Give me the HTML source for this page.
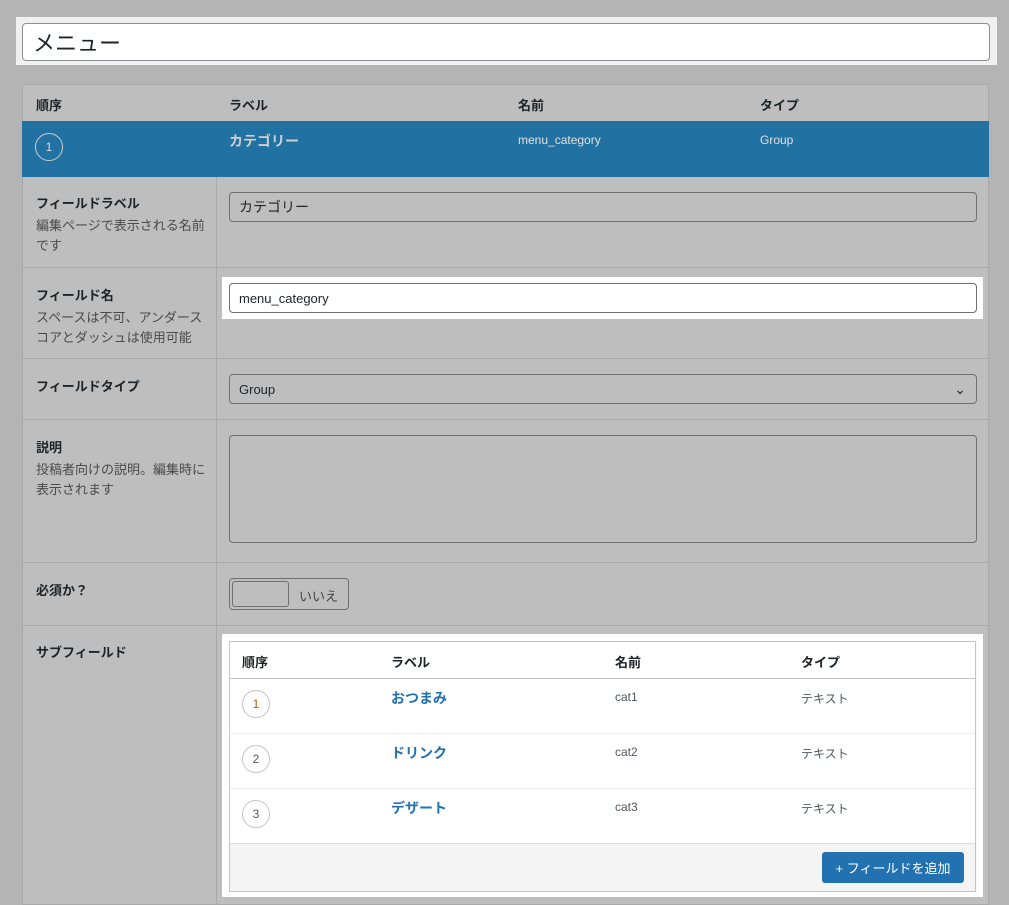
<html><head><style>
*{box-sizing:border-box;margin:0;padding:0}
body{width:1009px;height:905px;background:#b4b4b4;font-family:"Liberation Sans","Noto Sans CJK JP",sans-serif;position:relative;overflow:hidden;color:#1d2327}
.a{position:absolute}
.inp{position:absolute;border:1px solid #6f6f6f;border-radius:4px;font-size:14px;padding-left:9px;display:flex;align-items:center}
.lb{position:absolute;left:36px;font-size:13px;font-weight:bold}
.ds{font-weight:normal;color:#4a4a4a;display:block;margin-top:4px;line-height:20px}
.hl{position:absolute;left:22px;width:967px;height:1px;background:#a9a9a9}
.c{position:absolute;width:28px;height:28px;border:1px solid #c3c4c7;border-radius:50%;font-size:12px;display:flex;align-items:center;justify-content:center;color:#50575e}
</style></head><body>
<div class="a" style="left:16px;top:17px;width:981px;height:48px;background:#f0f0f0"></div>
<div class="inp" style="left:22px;top:23px;width:968px;height:38px;background:#fff;font-size:22px;padding-left:10px;border-color:#8c8f94">メニュー</div>
<div class="a" style="left:22px;top:84px;width:967px;height:821px;background:#bebebe;border:1px solid #a9a9a9"></div>
<div class="a" style="left:216px;top:177px;width:1px;height:728px;background:#a9a9a9"></div>
<div class="a" style="top:95px;left:36px;font-size:13px;font-weight:bold">順序</div>
<div class="a" style="top:95px;left:229px;font-size:13px;font-weight:bold">ラベル</div>
<div class="a" style="top:95px;left:518px;font-size:13px;font-weight:bold">名前</div>
<div class="a" style="top:95px;left:760px;font-size:13px;font-weight:bold">タイプ</div>
<div class="a" style="left:22px;top:121px;width:967px;height:56px;background:#2271a3"></div>
<div class="c" style="left:35px;top:133px;color:#ddd;border-color:#ccc">1</div>
<div class="a" style="top:131px;left:229px;font-size:14px;font-weight:bold;color:#d0d0d0">カテゴリー</div>
<div class="a" style="top:133px;left:518px;font-size:12px;color:#e0e0e0">menu_category</div>
<div class="a" style="top:133px;left:760px;font-size:12px;color:#e0e0e0">Group</div>
<div class="lb" style="top:193px">フィールドラベル<span class="ds">編集ページで表示される名前<br>です</span></div>
<div class="inp" style="left:229px;top:192px;width:748px;height:30px">カテゴリー</div>
<div class="hl" style="top:267px"></div>
<div class="lb" style="top:285px">フィールド名<span class="ds">スペースは不可、アンダース<br>コアとダッシュは使用可能</span></div>
<div class="a" style="left:222px;top:277px;width:761px;height:42px;background:#fff"></div>
<div class="inp" style="left:229px;top:283px;width:748px;height:30px;background:#fff;font-size:13px">menu_category</div>
<div class="hl" style="top:358px"></div>
<div class="lb" style="top:376px">フィールドタイプ</div>
<div class="inp" style="left:229px;top:374px;width:748px;height:30px;font-size:13px">Group<span style="position:absolute;right:10px;top:6px;font-size:14px">⌄</span></div>
<div class="hl" style="top:419px"></div>
<div class="lb" style="top:437px">説明<span class="ds">投稿者向けの説明。編集時に<br>表示されます</span></div>
<div class="inp" style="left:229px;top:435px;width:748px;height:108px"></div>
<div class="hl" style="top:562px"></div>
<div class="lb" style="top:580px">必須か？</div>
<div class="a" style="left:229px;top:578px;width:120px;height:32px;border:1px solid #6f6f6f;border-radius:4px"></div>
<div class="a" style="left:232px;top:581px;width:57px;height:26px;border:1px solid #6f6f6f;border-radius:3px"></div>
<div class="a" style="left:299px;top:586px;font-size:13px;color:#444">いいえ</div>
<div class="hl" style="top:625px"></div>
<div class="lb" style="top:642px">サブフィールド</div>
<div class="a" style="left:222px;top:634px;width:761px;height:263px;background:#fff"></div>
<div class="a" style="left:229px;top:641px;width:747px;height:251px;border:1px solid #c3c4c7"></div>
<div class="a" style="left:230px;top:678px;width:745px;height:1px;background:#c3c4c7"></div>
<div class="a" style="left:230px;top:733px;width:745px;height:1px;background:#eee"></div>
<div class="a" style="left:230px;top:788px;width:745px;height:1px;background:#eee"></div>
<div class="a" style="left:230px;top:843px;width:745px;height:48px;background:#f4f4f4;border-top:1px solid #ddd"></div>
<div class="a" style="top:652px;left:242px;font-size:13px;font-weight:bold">順序</div>
<div class="a" style="top:652px;left:391px;font-size:13px;font-weight:bold">ラベル</div>
<div class="a" style="top:652px;left:615px;font-size:13px;font-weight:bold">名前</div>
<div class="a" style="top:652px;left:801px;font-size:13px;font-weight:bold">タイプ</div>
<div class="c" style="left:242px;top:690px;color:#b26200">1</div>
<div class="a" style="top:688px;left:391px;font-size:14px;font-weight:bold;color:#2271b1">おつまみ</div>
<div class="a" style="top:690px;left:615px;font-size:12px;color:#50575e">cat1</div>
<div class="a" style="top:690px;left:801px;font-size:12px;color:#50575e">テキスト</div>
<div class="c" style="left:242px;top:745px">2</div>
<div class="a" style="top:743px;left:391px;font-size:14px;font-weight:bold;color:#2271b1">ドリンク</div>
<div class="a" style="top:745px;left:615px;font-size:12px;color:#50575e">cat2</div>
<div class="a" style="top:745px;left:801px;font-size:12px;color:#50575e">テキスト</div>
<div class="c" style="left:242px;top:800px">3</div>
<div class="a" style="top:798px;left:391px;font-size:14px;font-weight:bold;color:#2271b1">デザート</div>
<div class="a" style="top:800px;left:615px;font-size:12px;color:#50575e">cat3</div>
<div class="a" style="top:800px;left:801px;font-size:12px;color:#50575e">テキスト</div>
<div class="a" style="left:822px;top:852px;width:142px;height:31px;background:#2271b1;border-radius:3px;color:#fff;font-size:13px;display:flex;align-items:center;justify-content:center">+ フィールドを追加</div>
</body></html>
